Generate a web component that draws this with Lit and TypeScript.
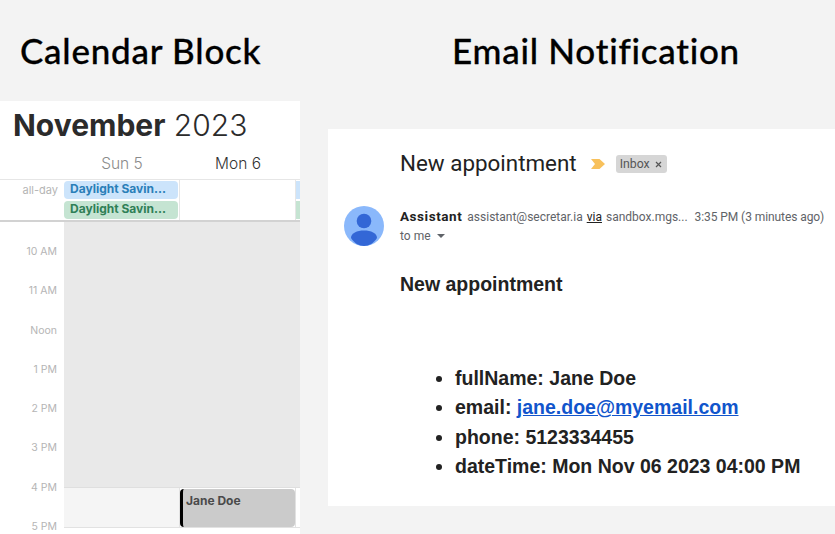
import {html, css, LitElement} from 'lit';
import {customElement} from 'lit/decorators.js';

const HOURS = ['10 AM', '11 AM', 'Noon', '1 PM', '2 PM', '3 PM', '4 PM', '5 PM'];

const FIELDS = [
  {label: 'fullName', value: 'Jane Doe'},
  {label: 'email', value: 'jane.doe@myemail.com', link: true},
  {label: 'phone', value: '5123334455'},
  {label: 'dateTime', value: 'Mon Nov 06 2023 04:00 PM'},
];

@customElement('app-root')
export class AppRoot extends LitElement {
  static styles = css`
    :host {
      display: block;
      width: 835px;
      height: 534px;
      overflow: hidden;
      background: #f3f3f3;
    }

    .page {
      display: grid;
      grid-template-columns: 300px 507px;
      column-gap: 28px;
      height: 534px;
    }

    .title {
      margin: 0;
      font: 500 35px/1 Lato, sans-serif;
      font-variant-ligatures: none;
      letter-spacing: 0.75px;
      color: #000;
      -webkit-text-stroke: 0.3px #000;
      white-space: nowrap;
    }

    .left .title {
      padding: 33px 0 0 20px;
      height: 68px;
    }

    .right .title {
      padding: 33px 0 0 124px;
      height: 96px;
    }

    /* calendar */
    .calendar {
      background: #fff;
      height: 433px;
      overflow: hidden;
      font-family: Inter, sans-serif;
    }

    .month {
      margin: 0;
      padding: 6px 0 0 13px;
      height: 35px;
      font-size: 30px;
      line-height: 36px;
      font-weight: 300;
      color: #2b2b2b;
      white-space: nowrap;
    }

    .month b {
      font-weight: 700;
    }

    .days {
      display: grid;
      grid-template-columns: 64px 116px 116px;
      height: 37px;
      border-bottom: 1px solid #e6e6e6;
      font-size: 15.5px;
      font-weight: 300;
      line-height: 43px;
      text-align: center;
      color: #8a8a8a;
    }

    .days .today {
      color: #333;
    }

    .allday {
      display: grid;
      grid-template-columns: 64px 116px 116px 4px;
      height: 40px;
      border-bottom: 2px solid #d2d2d2;
    }

    .allday .label {
      padding: 3px 6px 0 0;
      text-align: right;
      font-size: 11px;
      line-height: 14px;
      color: #b5b5b5;
    }

    .allday .col {
      border-right: 1px solid #e6e6e6;
      padding: 1px 0 0;
      display: flex;
      flex-direction: column;
      gap: 2px;
    }

    .allday .sliver {
      display: flex;
      flex-direction: column;
      gap: 2px;
      padding-top: 1px;
    }

    .allday .sliver i {
      display: block;
      height: 18px;
      background: #cce4fb;
    }

    .allday .sliver i + i {
      background: #c5e4d2;
    }

    .chip {
      height: 18px;
      margin-right: 1px;
      padding-left: 6px;
      border-radius: 4px;
      font-size: 12px;
      line-height: 16px;
      font-weight: 700;
      white-space: nowrap;
    }

    .chip.blue {
      background: #cce4fb;
      color: #2a7fb8;
    }

    .chip.green {
      background: #c5e4d2;
      color: #2f7f57;
    }

    .body {
      display: grid;
      grid-template-columns: 64px 236px;
    }

    .gutter {
      padding-top: 10px;
    }

    .hour {
      height: 39.3px;
      padding-right: 7px;
      text-align: right;
      font-size: 10.5px;
      line-height: 40px;
      color: #b5b5b5;
      white-space: nowrap;
    }

    .grey {
      height: 265px;
      background: #e9e9e9;
    }

    .slot {
      display: grid;
      grid-template-columns: 116px 116px 4px;
      height: 39px;
      border-top: 1px solid #dfdfdf;
      border-bottom: 1px solid #e2e2e2;
    }

    .slot .past {
      background: #f5f5f5;
    }

    .slot .now {
      padding: 1px 0 0 0;
      border-right: 1px solid #e2e2e2;
      border-left: 1px solid #e2e2e2;
      margin-left: -1px;
    }

    .event {
      height: 100%;
      padding: 4px 0 0 3px;
      box-sizing: border-box;
      background: #cbcbcb;
      border-left: 3px solid #000;
      border-radius: 4px;
      font-size: 12px;
      line-height: 16px;
      font-weight: 700;
      color: #4a4a4a;
    }

    /* email */
    .mail {
      background: #fff;
      height: 377px;
      font-family: Roboto, sans-serif;
      color: #222;
    }

    .subject {
      display: flex;
      align-items: center;
      height: 35px;
      padding: 16px 0 0 72px;
      font-size: 22.4px;
      color: #222;
    }

    .subject svg {
      margin: 3px 11px 0 14px;
    }

    .tag {
      display: flex;
      align-items: center;
      gap: 5px;
      height: 18px;
      margin-top: 3px;
      padding: 0 5px 0 4px;
      border-radius: 3px;
      background: #d6d6d6;
      font-size: 12.3px;
      color: #555;
    }

    .head {
      display: grid;
      grid-template-columns: 56px 1fr;
      padding: 26px 0 0 16px;
    }

    .meta {
      display: flex;
      align-items: baseline;
      font-size: 12px;
      line-height: 16px;
      padding-top: 2px;
      color: #5f6368;
      white-space: nowrap;
    }

    .meta b {
      color: #222;
      font-size: 13.5px;
      letter-spacing: 0.55px;
      font-weight: 700;
      margin-right: 5px;
    }

    .meta u {
      color: #222;
      margin: 0 4px;
    }

    .meta .when {
      margin-left: 7px;
      letter-spacing: -0.08px;
    }

    .tome {
      display: flex;
      align-items: center;
      gap: 6px;
      padding-top: 3px;
      font-size: 12px;
      line-height: 16px;
      color: #5f6368;
    }

    .content {
      padding: 26px 0 0 72px;
      font-family: 'Liberation Sans', Arial, sans-serif;
      font-weight: 700;
      color: #222;
    }

    .content h3 {
      margin: 0;
      font-size: 19.5px;
      line-height: 24px;
    }

    .content ul {
      margin: 68px 0 0;
      padding-left: 55px;
      list-style: none;
      font-size: 19.5px;
      line-height: 29.3px;
      white-space: nowrap;
    }

    .content li::before {
      content: '';
      display: inline-block;
      width: 6px;
      height: 6px;
      margin: 0 13px 0 -19px;
      border-radius: 50%;
      background: #222;
      vertical-align: 3px;
    }

    .content a {
      color: #1155cc;
      text-decoration: underline;
    }
  `;

  render() {
    return html`
      <div class="page">
        <section class="left">
          <h1 class="title">Calendar Block</h1>
          ${this.renderCalendar()}
        </section>
        <section class="right">
          <h1 class="title">Email Notification</h1>
          ${this.renderMail()}
        </section>
      </div>
    `;
  }

  renderCalendar() {
    return html`
      <div class="calendar">
        <h2 class="month"><b>November</b> 2023</h2>
        <div class="days">
          <span></span>
          <span>Sun 5</span>
          <span class="today">Mon 6</span>
        </div>
        <div class="allday">
          <div class="label">all-day</div>
          <div class="col">
            <div class="chip blue">Daylight Savin...</div>
            <div class="chip green">Daylight Savin...</div>
          </div>
          <div class="col"></div>
          <div class="sliver"><i></i><i></i></div>
        </div>
        <div class="body">
          <div class="gutter">
            ${HOURS.map((h) => html`<div class="hour">${h}</div>`)}
          </div>
          <div>
            <div class="grey"></div>
            <div class="slot">
              <div class="past"></div>
              <div class="now"><div class="event">Jane Doe</div></div>
              <div></div>
            </div>
          </div>
        </div>
      </div>
    `;
  }

  renderMail() {
    return html`
      <div class="mail">
        <div class="subject">
          New appointment
          <svg width="14" height="10" viewBox="0 0 14 10">
            <path d="M0 0h8.5L14 5l-5.500 5H0l4-5z" fill="#f8c15c" />
          </svg>
          <span class="tag">
            Inbox
            <svg style="margin:1px 0 0" width="7" height="7" viewBox="0 0 7 7">
              <path d="M1 1l5 5M6 1L1 6" stroke="#555" stroke-width="1.2" fill="none" />
            </svg>
          </span>
        </div>
        <div class="head">
          <svg width="40" height="40" viewBox="0 0 40 40">
            <circle cx="20" cy="20" r="20" fill="#8ab8fb" />
            <circle cx="20" cy="15" r="7.3" fill="#3367d6" />
            <path d="M7 32c0-5 6-7.500 13-7.500s13 2.500 13 7.500c-3 5-8 8-13 8s-10-3-13-8z" fill="#3367d6" />
          </svg>
          <div>
            <div class="meta">
              <b>Assistant</b>assistant@secretar.ia<u>via</u>sandbox.mgs...
              <span class="when">3:35 PM (3 minutes ago)</span>
            </div>
            <div class="tome">
              to me
              <svg width="8" height="4" viewBox="0 0 8 4"><path d="M0 0h8L4 4z" fill="#5f6368" /></svg>
            </div>
          </div>
        </div>
        <div class="content">
          <h3>New appointment</h3>
          <ul>
            ${FIELDS.map(
              (f) => html`<li>${f.label}: ${f.link ? html`<a href="#">${f.value}</a>` : f.value}</li>`
            )}
          </ul>
        </div>
      </div>
    `;
  }
}
